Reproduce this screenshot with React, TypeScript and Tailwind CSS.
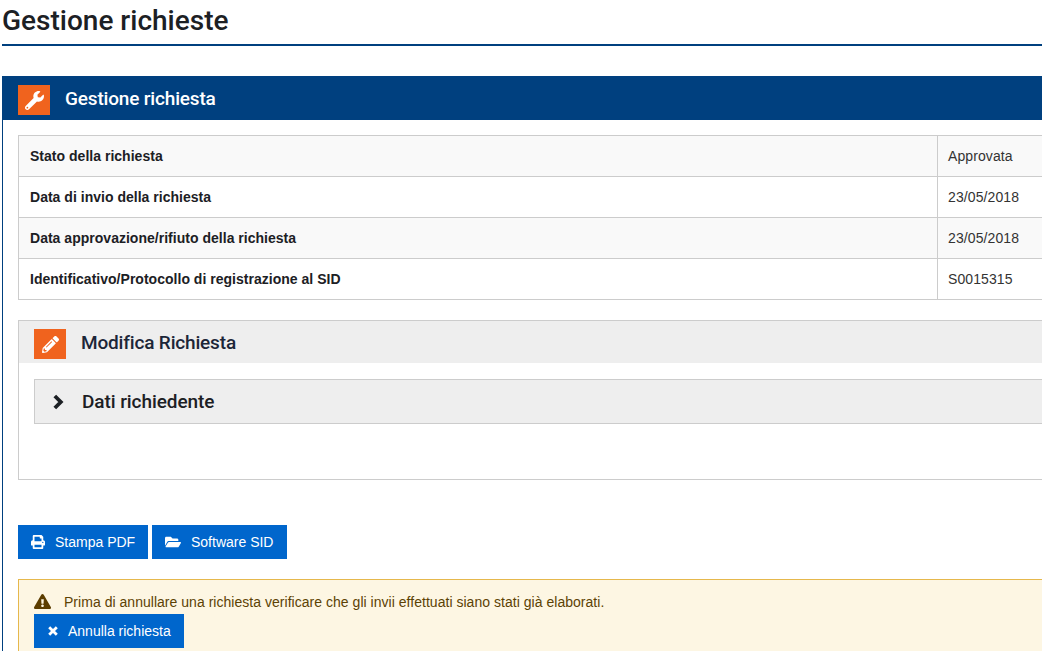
import { FaExclamationTriangle, FaFolderOpen, FaPencilAlt, FaPrint, FaWrench } from "react-icons/fa";

const rows = [
  { label: "Stato della richiesta", value: "Approvata", alt: true },
  { label: "Data di invio della richiesta", value: "23/05/2018", alt: false },
  { label: "Data approvazione/rifiuto della richiesta", value: "23/05/2018", alt: true },
  { label: "Identificativo/Protocollo di registrazione al SID", value: "S0015315", alt: false },
];

function DetailTable() {
  return (
    <div className="border-t border-l border-[#cccccc]">
      {rows.map((row) => (
        <div key={row.label} className={`flex h-[41px] items-center border-b border-[#cccccc] ${row.alt ? "bg-[#f9f9f9]" : "bg-white"}`}>
          <div className="flex h-full w-[919px] items-center border-r border-[#cccccc] pl-[11px] text-[14px] font-bold tracking-[0.02px] text-[#1c2024]">{row.label}</div>
          <div className="pl-[10px] text-[14px] tracking-[0.1px] text-[#333333]">{row.value}</div>
        </div>
      ))}
    </div>
  );
}

export default function App() {
  return (
    <div className="h-[651px] w-[1042px] overflow-hidden bg-white font-['Liberation_Sans',sans-serif]">
      <div className="ml-[2px] w-[1100px]">
        <div className="h-[46px] border-b-2 border-[#00407f]">
          <h1 className="font-['Roboto',sans-serif] text-[28px] leading-[42px] font-medium text-[#1c2024]">Gestione richieste</h1>
        </div>

        <div className="mt-[30px] border-l border-[#00407f] pb-[40px]">
          <div className="flex h-[44px] items-center bg-[#00407f] pl-[15px]">
            <span className="mt-[4px] flex h-[30px] w-[32px] items-center justify-center bg-[#f0631e] text-white">
              <FaWrench className="size-[19px]" />
            </span>
            <span className="mt-[2px] ml-[15px] font-['Roboto',sans-serif] text-[19px] font-medium tracking-[-0.17px] text-white">Gestione richiesta</span>
          </div>

          <div className="pt-[15px] pl-[15px]">
            <DetailTable />

            <div className="mt-[20px] h-[160px] border border-[#cccccc]">
              <div className="flex h-[42px] items-center bg-[#eeeeee] pl-[15px]">
                <span className="mt-[4px] flex h-[30px] w-[32px] items-center justify-center bg-[#f0631e] text-white">
                  <FaPencilAlt className="size-[17px]" />
                </span>
                <span className="mt-[2px] ml-[15px] font-['Roboto',sans-serif] text-[19px] font-medium tracking-[-0.17px] text-[#1c2638]">Modifica Richiesta</span>
              </div>
              <div className="mt-[16px] ml-[15px] flex h-[45px] items-center border border-[#cccccc] bg-[#eeeeee] pl-[17px]">
                <svg width="13" height="16" viewBox="0 0 13 16" className="text-[#1c2024]">
                  <polyline points="2.8,2 8.8,8 2.8,14" fill="none" stroke="currentColor" strokeWidth="3.8" />
                </svg>
                <span className="mt-[2px] ml-[17px] font-['Roboto',sans-serif] text-[19px] font-medium tracking-[-0.07px] text-[#1c2024]">Dati richiedente</span>
              </div>
            </div>

            <div className="mt-[45px] flex gap-[4px]">
              <button className="flex h-[34px] w-[130px] items-center bg-[#0066cc] pl-[13px] text-[14px] text-white">
                <FaPrint className="size-[14px]" />
                <span className="ml-[10px]">Stampa PDF</span>
              </button>
              <button className="flex h-[34px] w-[135px] items-center bg-[#0066cc] pl-[13px] text-[14px] text-white">
                <FaFolderOpen className="size-[16px]" />
                <span className="ml-[10px]">Software SID</span>
              </button>
            </div>

            <div className="mt-[20px] border border-[#e6b84c] bg-[#fdf6e3] pt-[13px] pb-[10px] pl-[15px]">
              <div className="flex items-center text-[14px] leading-[16px] tracking-[0.03px] text-[#5c4204]">
                <FaExclamationTriangle className="size-[17px] text-[#5c3d00]" />
                <span className="ml-[13px]">Prima di annullare una richiesta verificare che gli invii effettuati siano stati già elaborati.</span>
              </div>
              <button className="mt-[4px] flex h-[34px] w-[150px] items-center bg-[#0066cc] pl-[14px] text-[14px] text-white">
                <svg width="10" height="10" viewBox="0 0 10 10">
                  <path d="M1.2 1.2 8.8 8.8M8.8 1.2 1.2 8.8" stroke="white" strokeWidth="2.8" fill="none" />
                </svg>
                <span className="ml-[10px]">Annulla richiesta</span>
              </button>
            </div>
          </div>
        </div>
      </div>
    </div>
  );
}
